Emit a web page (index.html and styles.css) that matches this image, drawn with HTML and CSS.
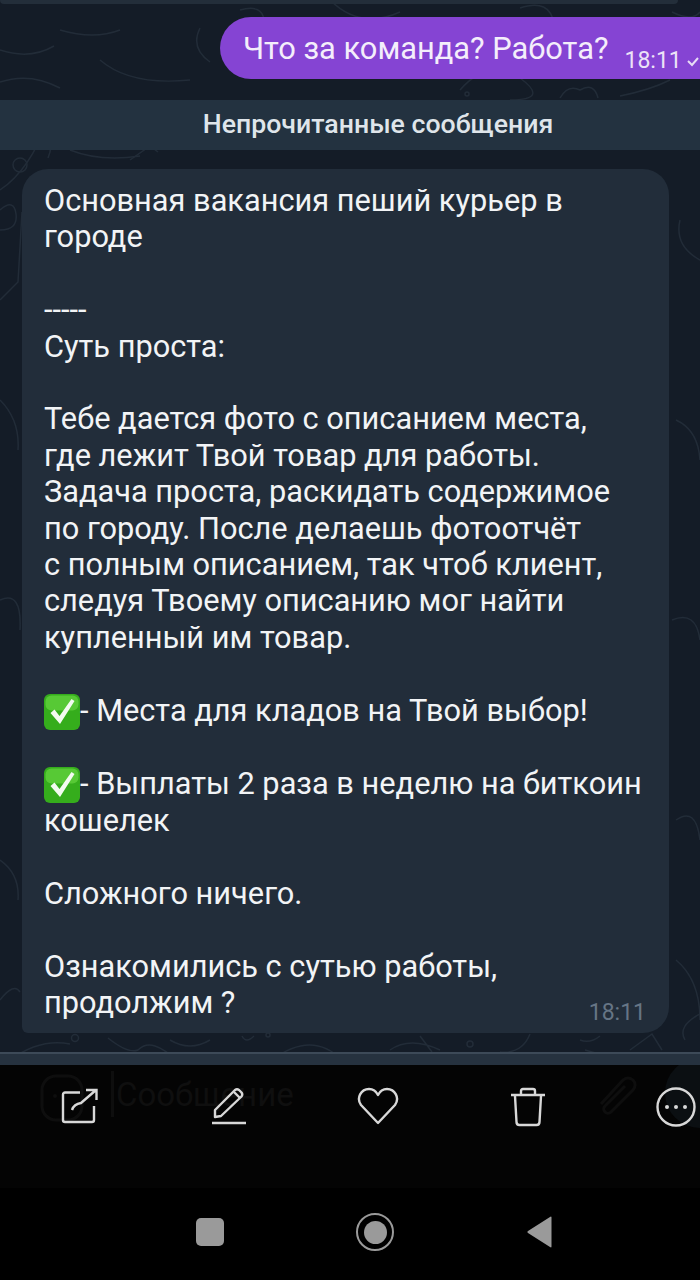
FILE: index.html
```html
<!DOCTYPE html>
<html lang="ru">
<head>
<meta charset="utf-8">
<title>Чат</title>
<link rel="stylesheet" href="styles.css">
</head>
<body>
<main class="chat">
  <svg class="doodles" width="700" height="1065" viewBox="0 0 700 1065" fill="none" aria-hidden="true">
    <g stroke="#222c38" stroke-width="1.5">
      <circle cx="20" cy="165" r="7"/><path d="M0 190q30-20 48-70M40 128q16 12 8 30"/>
      <path d="M0 210q14-12 16 4t-16 16"/><path d="M0 300l18-18 4-70"/>
      <path d="M70 150q30 12 70 6"/><path d="M130 160l20-14 8 6"/>
      <path d="M460 90q30-34 60-12t-10 22"/><circle cx="467" cy="94" r="2"/>
      <path d="M560 98q8-14 20-8 14-8 18 8"/><path d="M620 96q30-6 50-16"/>
      <path d="M240 10q22-6 24 10M330 0q30 30 70 12M430 30q-14 18 6 30"/>
      <path d="M520 8q30-10 34 16M600 40q40-20 60 4M672 12q20 10 28 0"/>
      <path d="M200 28q-10 20 10 34M60 30q34 10 60 0M0 50q30 10 54-4"/>
      <path d="M0 82q30-10 60 6M100 60q30 26 90 20"/>
      <path d="M680 220q-6 26 20 40M676 420q22 10 24 40M672 620q24-10 28 20M676 820q20-14 24 20M676 960q24 20 24 60"/>
      <path d="M0 400q20 20 18 50M0 600q22-10 20 30M0 860q20 14 18 40M0 1000q14-18 20-8"/>
      <path d="M10 1060q30-22 60-16"/>
      <circle cx="75" cy="1038" r="3.5"/><path d="M108 1038q20 16 30 12 14-14 40 12"/>
      <path d="M170 1040q20 12 40 0M242 1036q4 8 12 0"/><circle cx="268" cy="1035" r="2"/>
      <path d="M272 1060q40-30 70 0M390 1050q20-14 50 0M420 1036l12 16"/><circle cx="470" cy="1044" r="3"/>
      <path d="M530 1034q-8 20-30 18M580 1040q10 4 20-4M585 1050l14 4M630 1050l22-16 10 16"/>
      <path d="M685 1040q-8-14 15-26"/>
    </g>
  </svg>
  <div class="prev-edge"></div>
  <div class="row-out">
    <div class="bubble-out">
      <span class="out-text">Что за команда? Работа?</span>
      <span class="out-time">18:11</span>
      <svg class="out-check" width="12" height="10" viewBox="0 0 12 10" fill="none" aria-hidden="true"><path d="M1 4l4 4 6-7" stroke="#e7dcf5" stroke-width="2"/></svg>
    </div>
  </div>
  <div class="unread">Непрочитанные сообщения</div>
  <article class="bubble-in">
    <p class="msg">Основная вакансия пеший курьер в<br>городе<br><br>-----<br>Суть проста:<br><br>Тебе дается фото с описанием места,<br>где лежит Твой товар для работы.<br>Задача проста, раскидать содержимое<br>по городу. После делаешь фотоотчёт<br>с полным описанием, так чтоб клиент,<br>следуя Твоему описанию мог найти<br>купленный им товар.<br><br><svg class="check-emoji" width="36" height="36" viewBox="0 0 36 36" aria-hidden="true"><rect width="36" height="36" rx="6" fill="#35ad1c"/><rect x="1.500" y="1.500" width="33" height="15" rx="6" fill="#57c935"/><path d="M6.500 19l4-3.500 5 6.500 12-17 3 2-14.500 23z" fill="#f3fbf0"/></svg>- Места для кладов на Твой выбор!<br><br><svg class="check-emoji" width="36" height="36" viewBox="0 0 36 36" aria-hidden="true"><rect width="36" height="36" rx="6" fill="#35ad1c"/><rect x="1.500" y="1.500" width="33" height="15" rx="6" fill="#57c935"/><path d="M6.500 19l4-3.500 5 6.500 12-17 3 2-14.500 23z" fill="#f3fbf0"/></svg>- Выплаты 2 раза в неделю на биткоин<br>кошелек<br><br>Сложного ничего.<br><br>Ознакомились с сутью работы,<br>продолжим ?</p>
    <span class="in-time">18:11</span>
  </article>
  <div class="input-top"></div>
</main>
<section class="toolbar">
  <div class="ghost" aria-hidden="true">
    <svg class="ghost-smile" width="44" height="48" viewBox="0 0 44 48" fill="none"><rect x="2" y="2" width="40" height="44" rx="14" stroke="#0e0e0e" stroke-width="3"/><circle cx="15" cy="22" r="2" fill="#0e0e0e"/></svg>
    <span class="ghost-bar"></span>
    <span class="ghost-text">Сообщение</span>
    <svg class="ghost-clip" width="40" height="46" viewBox="0 0 40 46" fill="none"><path d="M4 30L26 6a7 7 0 0 1 10 10L14 38a4 4 0 0 1-6-6l20-20" stroke="#0e0e0e" stroke-width="3"/></svg>
    <span class="ghost-send"></span>
  </div>
  <svg class="tool" width="38" height="38" viewBox="0 0 38 38" fill="none" aria-hidden="true"><path d="M20 5.500H5a2 2 0 0 0-2 2V33a2 2 0 0 0 2 2h27a2 2 0 0 0 2-2V19" stroke="#d8d8d8" stroke-width="2.400" stroke-linejoin="round"/><path d="M12 23q2-6 9-7l15-13M26 3h10.500v10" stroke="#d8d8d8" stroke-width="2.400"/></svg>
  <svg class="tool" width="38" height="38" viewBox="0 0 38 38" fill="none" aria-hidden="true"><path d="M5 23L25 3q2-1.500 4 0l2.500 2.500q1.500 2 0 4L11 29l-6 1z" stroke="#d8d8d8" stroke-width="2.400" stroke-linejoin="round"/><path d="M24 5l6 6" stroke="#d8d8d8" stroke-width="2.400"/><path d="M2 36h34" stroke="#d8d8d8" stroke-width="2.600"/></svg>
  <svg class="tool" width="42" height="38" viewBox="0 0 42 38" fill="none" aria-hidden="true"><path d="M21 36L4 18C-1 11 4 2 12 2q6 0 9 6 3-6 9-6c8 0 13 9 8 16z" stroke="#d8d8d8" stroke-width="2.400" stroke-linejoin="round"/></svg>
  <svg class="tool" width="36" height="40" viewBox="0 0 36 40" fill="none" aria-hidden="true"><path d="M1 8h34M11 8V4q0-2 2-2h10q2 0 2 2v4" stroke="#d8d8d8" stroke-width="2.400"/><path d="M5 9l1.500 26q0 3 3 3h17q3 0 3-3L31 9" stroke="#d8d8d8" stroke-width="2.400"/></svg>
  <svg class="tool" width="40" height="40" viewBox="0 0 40 40" fill="none" aria-hidden="true"><circle cx="20" cy="20" r="18.500" stroke="#d8d8d8" stroke-width="2.400"/><circle cx="11" cy="20" r="2" fill="#d8d8d8"/><circle cx="20" cy="20" r="2" fill="#d8d8d8"/><circle cx="29" cy="20" r="2" fill="#d8d8d8"/></svg>
</section>
<nav class="navbar">
  <span class="nav-square"></span>
  <span class="nav-home"><span class="nav-dot"></span></span>
  <svg width="28" height="32" viewBox="0 0 28 32" aria-hidden="true"><path d="M25.500 1.500v29q0 1.500-1.500.5L2 17q-1.500-1 0-2L24 1q1.500-1 1.500.5z" fill="#9a9a9a"/></svg>
</nav>
</body>
</html>
```
FILE: styles.css
```css
* { box-sizing: border-box; }
html, body { margin: 0; padding: 0; }
body {
  width: 700px;
  height: 1280px;
  overflow: hidden;
  background: #000;
  font-family: Roboto, "Liberation Sans", sans-serif;
  display: flex;
  flex-direction: column;
}
.chat {
  position: relative;
  height: 1065px;
  flex: none;
  overflow: hidden;
  background: #141c27;
  display: flex;
  flex-direction: column;
}
.doodles { position: absolute; left: 0; top: 0; }
.prev-edge {
  position: relative;
  height: 4px;
  margin: 0 22px 13px 0;
  background: #232e3a;
  border-radius: 0 0 16px 16px;
  flex: none;
}
.row-out { position: relative; display: flex; justify-content: flex-end; flex: none; }
.bubble-out {
  width: 480px;
  height: 62px;
  margin-right: 0;
  background: #8544d3;
  border-radius: 31px 0 0 31px;
  color: #f4eefb;
  display: flex;
  align-items: baseline;
  padding: 14px 0 0 23px;
  white-space: nowrap;
}
.out-text { font-size: 30.800px; line-height: 36px; }
.out-time { font-size: 23px; line-height: 36px; margin-left: 16px; position: relative; top: 9px; color: #ece2f7; }
.out-check { margin-left: 5px; position: relative; top: 8px; }
.unread {
  position: relative;
  flex: none;
  height: 50px;
  margin-top: 21px;
  background: #233240;
  color: #dfe5ea;
  font-size: 26.700px;
  font-weight: 500;
  line-height: 48px;
  text-align: center;
  padding-left: 56px;
}
.bubble-in {
  position: relative;
  flex: none;
  width: 647px;
  height: 864px;
  margin: 19px 0 0 22px;
  padding: 14px 0 0 22px;
  background: #222d3a;
  border-radius: 26px 26px 26px 6px;
}
.msg {
  margin: 0;
  color: #f2f4f6;
  font-size: 30.750px;
  line-height: 36.400px;
  white-space: nowrap;
}
.check-emoji { vertical-align: -9px; }
.in-time {
  position: absolute;
  right: 23px;
  bottom: 6px;
  color: #667585;
  font-size: 23px;
  line-height: 28px;
}
.input-top {
  position: absolute;
  left: 0;
  right: 0;
  top: 1052px;
  height: 13px;
  background: #26323f;
  border-top: 2px solid #3d4a58;
}
.toolbar {
  position: relative;
  flex: none;
  height: 123px;
  background: #040404;
  display: grid;
  grid-template-columns: 158px 142px 155px 145px 1fr;
  align-items: start;
  padding-top: 22px;
  justify-items: center;
}
.tool { position: relative; }
.toolbar .tool:last-child { justify-self: end; margin-right: 4px; }
.ghost { position: absolute; inset: 0; overflow: hidden; }
.ghost-smile { position: absolute; left: 40px; top: 9px; }
.ghost-bar { position: absolute; left: 111px; top: 6px; width: 3px; height: 46px; background: #0e0e0e; }
.ghost-text { position: absolute; left: 116px; top: 10px; font-size: 33px; line-height: 40px; color: #0f0f0f; }
.ghost-clip { position: absolute; left: 597px; top: 9px; }
.ghost-send { position: absolute; left: 665px; top: -7px; width: 70px; height: 70px; border-radius: 50%; background: #0b0f12; }
.navbar {
  flex: none;
  height: 92px;
  background: #000;
  display: grid;
  grid-template-columns: repeat(3, 165px);
  align-items: center;
  justify-items: center;
  padding-left: 127.500px;
  padding-bottom: 4px;
}
.nav-square { width: 28px; height: 28px; border-radius: 5px; background: #9a9a9a; }
.nav-home {
  width: 38px;
  height: 38px;
  border: 2.500px solid #9a9a9a;
  border-radius: 50%;
  display: flex;
  align-items: center;
  justify-content: center;
}
.nav-dot { width: 23px; height: 23px; border-radius: 50%; background: #9a9a9a; }
```
